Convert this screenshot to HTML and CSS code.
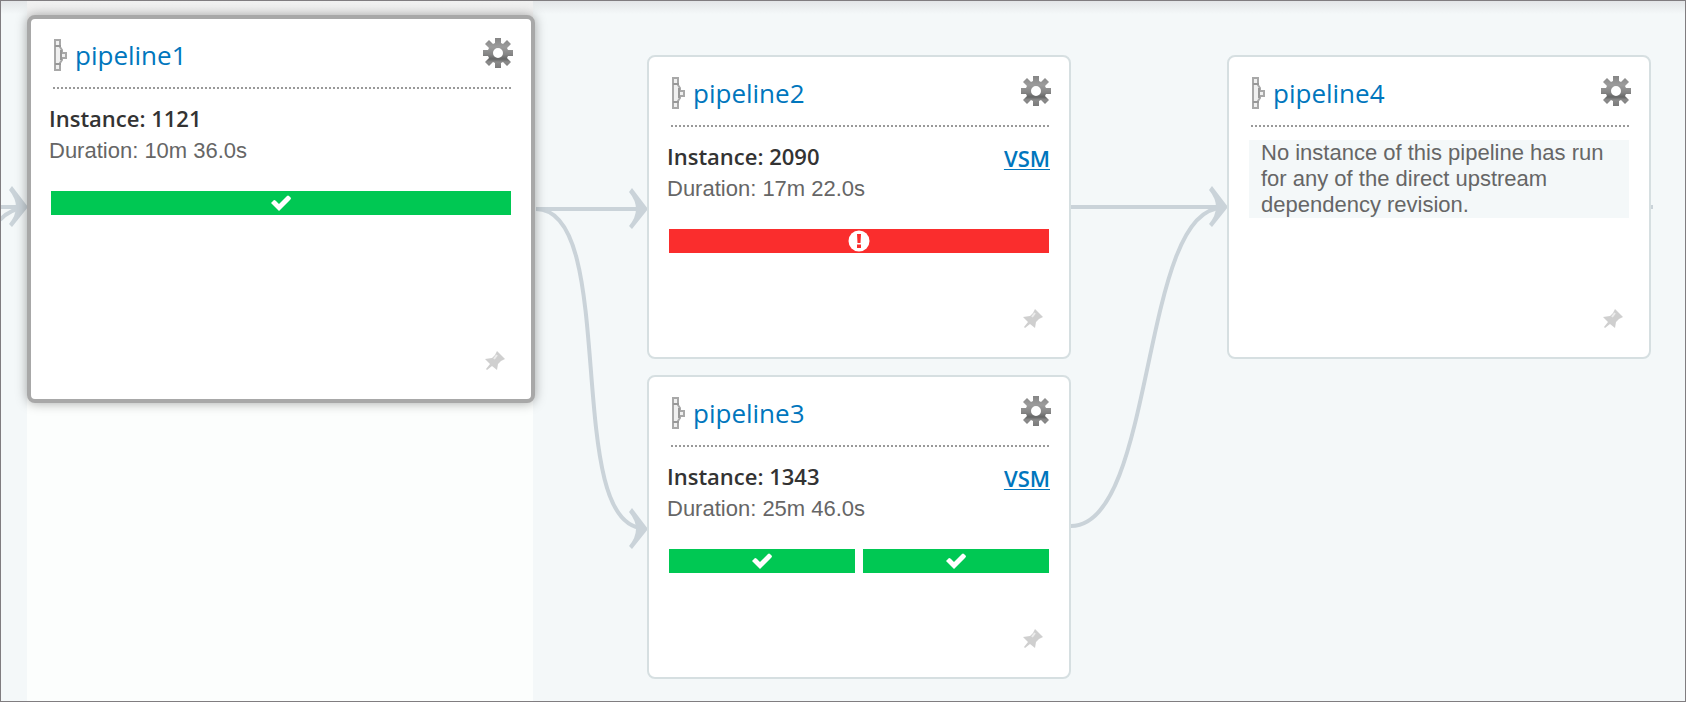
FILE: index.html
```html
<!DOCTYPE html>
<html lang="en">
<head>
<meta charset="utf-8">
<title>Value stream map</title>
<link rel="stylesheet" href="styles.css">
</head>
<body>
<svg class="symbols" aria-hidden="true">
  <defs>
    <linearGradient id="steel" x1="0" y1="0" x2="0" y2="1">
      <stop offset="0" stop-color="#858585"/><stop offset=".3" stop-color="#9c9c9c"/><stop offset=".55" stop-color="#858585"/><stop offset=".7" stop-color="#656666"/><stop offset=".8" stop-color="#8c8c8c"/><stop offset="1" stop-color="#7a7a7a"/>
    </linearGradient>
    <symbol id="pipe" viewBox="0 0 14 32">
      <path d="M2 1H7V8L9 11V14H13V19H9V21L7 24V31H2Z" fill="#f0f0f0" stroke="#a8a8a8" stroke-width="2"/>
      <path d="M2 7H8M2 25H8M8 11V21" fill="none" stroke="#989898" stroke-width="2"/>
    </symbol>
    <symbol id="gear" viewBox="-15 -15 30 30">
      <path fill="url(#steel)" fill-rule="evenodd" d="M-3-15H3V-10L5-9L9-13L13-9L9-5L10-3H15V3H10L9 5L13 9L9 13L5 9L3 10V15H-3V10L-5 9L-9 13L-13 9L-9 5L-10 3H-15V-3H-10L-9-5L-13-9L-9-13L-5-9L-3-10ZM0-5A5 5 0 1 0 0 5A5 5 0 1 0 0-5Z"/>
    </symbol>
    <symbol id="pin" viewBox="0 0 20 20">
      <path d="M12 0L20 8L16 10L13 13L12 19L7 15L2 19L1 18L5 13L0 8L7 7L10 4Z" fill="#cfcfcf"/>
      <path d="M12 4L9 8" stroke="#ececec" stroke-width="2"/>
    </symbol>
    <symbol id="check" viewBox="0 0 22 18">
      <path d="M2 8L4 6Q5 6 6 7L9 10L17 2Q18 1 19 2L21 4Q21 5 20 6L9 17L1 9Z" fill="#fff"/>
    </symbol>
    <symbol id="alert" viewBox="0 0 22 22">
      <circle cx="11" cy="11" r="10.5" fill="#fff"/>
      <path d="M9 4H13L12.500 13H9.500ZM9 14.500H13V18H9Z" fill="#fa2d2d"/>
    </symbol>
    <symbol id="head" viewBox="0 0 20 42">
      <path d="M4 0L20 21L4 41L1 38Q15 21 1 4Z" fill="#cad3d9"/>
    </symbol>
  </defs>
</svg>
<main class="map">
  <div class="level-band"></div>
  <svg class="links" aria-hidden="true">
    <g class="link-lines">
      <path d="M0 207H24M0 220Q10 209 24 208"/>
      <path d="M536 209H640"/>
      <path d="M536 209C620 209 562 528 644 528"/>
      <path d="M1071 207H1220"/>
      <path d="M1071 526C1156 526 1140 208 1222 208"/>
      <path d="M1651 207H1653"/>
    </g>
    <use href="#head" x="8" y="186" width="20" height="42"/>
    <use href="#head" x="628" y="188" width="20" height="42"/>
    <use href="#head" x="628" y="508" width="20" height="42"/>
    <use href="#head" x="1208" y="186" width="20" height="42"/>
  </svg>

  <article class="node current n1">
    <header class="node-head">
      <svg class="pipe"><use href="#pipe"/></svg>
      <h2><a href="#pipeline1">pipeline1</a></h2>
      <button class="gear" aria-label="Settings for pipeline1"><svg><use href="#gear"/></svg></button>
    </header>
    <div class="instance"><strong>Instance: 1121</strong></div>
    <p class="duration">Duration: 10m 36.0s</p>
    <div class="stages">
      <span class="stage passed"><svg class="check"><use href="#check"/></svg></span>
    </div>
    <button class="pin" aria-label="Pin pipeline1"><svg><use href="#pin"/></svg></button>
  </article>

  <article class="node n2">
    <header class="node-head">
      <svg class="pipe"><use href="#pipe"/></svg>
      <h2><a href="#pipeline2">pipeline2</a></h2>
      <button class="gear" aria-label="Settings for pipeline2"><svg><use href="#gear"/></svg></button>
    </header>
    <div class="instance"><strong>Instance: 2090</strong><a class="vsm" href="#vsm2">VSM</a></div>
    <p class="duration">Duration: 17m 22.0s</p>
    <div class="stages">
      <span class="stage failed"><svg class="alert"><use href="#alert"/></svg></span>
    </div>
    <button class="pin" aria-label="Pin pipeline2"><svg><use href="#pin"/></svg></button>
  </article>

  <article class="node n3">
    <header class="node-head">
      <svg class="pipe"><use href="#pipe"/></svg>
      <h2><a href="#pipeline3">pipeline3</a></h2>
      <button class="gear" aria-label="Settings for pipeline3"><svg><use href="#gear"/></svg></button>
    </header>
    <div class="instance"><strong>Instance: 1343</strong><a class="vsm" href="#vsm3">VSM</a></div>
    <p class="duration">Duration: 25m 46.0s</p>
    <div class="stages">
      <span class="stage passed"><svg class="check"><use href="#check"/></svg></span>
      <span class="stage passed"><svg class="check"><use href="#check"/></svg></span>
    </div>
    <button class="pin" aria-label="Pin pipeline3"><svg><use href="#pin"/></svg></button>
  </article>

  <article class="node n4">
    <header class="node-head">
      <svg class="pipe"><use href="#pipe"/></svg>
      <h2><a href="#pipeline4">pipeline4</a></h2>
      <button class="gear" aria-label="Settings for pipeline4"><svg><use href="#gear"/></svg></button>
    </header>
    <p class="note">No instance of this pipeline has run for any of the direct upstream dependency revision.</p>
    <button class="pin" aria-label="Pin pipeline4"><svg><use href="#pin"/></svg></button>
  </article>
</main>
</body>
</html>
```
FILE: styles.css
```css
* { box-sizing: border-box; }
body { margin: 0; font-family: "Liberation Sans", Arial, sans-serif; color: #666; }
h2, p { margin: 0; }
button { padding: 0; border: 0; background: none; display: block; cursor: pointer; }
svg { display: block; }
a { color: #0076bd; }
.symbols { position: absolute; width: 0; height: 0; }

.map { position: relative; height: 100vh; overflow: hidden; background: #f4f8f9; }
.map::before { content: ""; position: absolute; inset: 0 0 auto; height: 14px; background: linear-gradient(#e1e4e6, #f4f8f900); }
.map::after { content: ""; position: absolute; inset: 0; border: 1px solid #807d80; pointer-events: none; }
.level-band { position: absolute; left: 27px; top: 0; bottom: 0; width: 506px; background: linear-gradient(#f0f0f0, #f3f3f3 14px, #fcfefd 40px); }
.links { position: absolute; inset: 0; width: 100%; height: 100%; }
.link-lines { fill: none; stroke: #cad3d9; stroke-width: 4; }

.node { position: absolute; display: flex; flex-direction: column; width: 424px; min-height: 304px; padding: 18px 20px 28px; background: #fff; border: 2px solid #d6dfe1; border-radius: 8px; }
.current { width: 508px; min-height: 388px; border: 4px solid #a8a8a8; box-shadow: 0 0 12px #00000059; }
.n1 { left: 27px; top: 15px; }
.n2 { left: 647px; top: 55px; }
.n3 { left: 647px; top: 375px; }
.n4 { left: 1227px; top: 55px; }

.node-head { display: flex; align-items: flex-start; gap: 8px; height: 52px; margin-left: 2px; border-bottom: 2px dotted #999; }
.node-head h2 { flex: 1; font: 400 26px/36px "Open Sans", sans-serif; }
.node-head h2 a { text-decoration: none; }
.pipe { width: 14px; height: 32px; margin-top: 2px; }
.gear { margin: 1px -2px 0 0; }
.gear svg { width: 30px; height: 30px; }

.instance { display: flex; justify-content: space-between; height: 32px; margin: 13px -1px 0 -2px; font: 600 22px/32px "Open Sans", sans-serif; color: #333; }
.instance strong { font-weight: 600; }
.vsm { line-height: 36px; text-decoration-thickness: 1px; text-underline-offset: 2px; }
.duration { margin: 1px 0 0 -2px; font-size: 22px; line-height: 32px; }
.stages { display: flex; gap: 8px; margin-top: 24px; }
.stage { flex: 1; display: flex; align-items: center; justify-content: center; height: 24px; }
.passed { background: #00c853; }
.failed { background: #fa2d2d; }
.check { width: 22px; height: 18px; }
.alert { width: 22px; height: 22px; }
.note { margin-top: 13px; padding-left: 12px; font-size: 22px; line-height: 26px; background: #f4f8f9; }
.pin { margin: auto 6px 0 auto; }
.pin svg { width: 20px; height: 20px; }
```
